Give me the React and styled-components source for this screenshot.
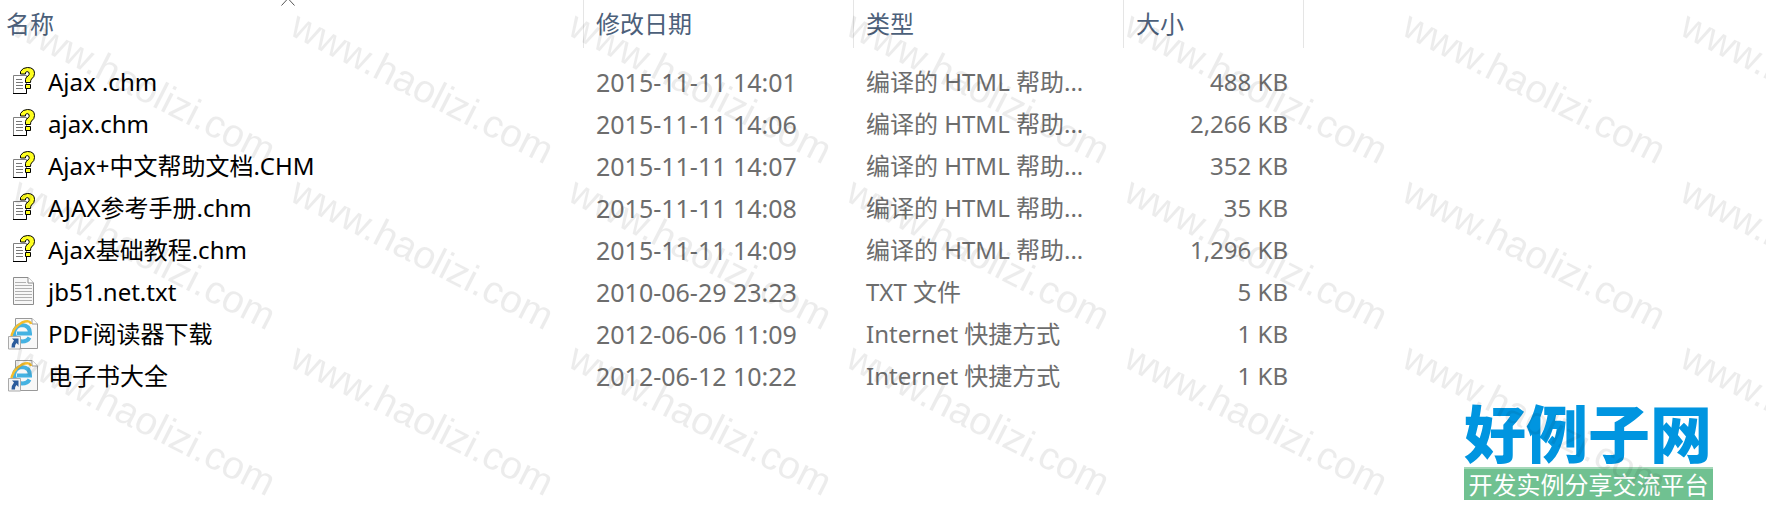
import React from "react";
import styled, { createGlobalStyle } from "styled-components";

const Global = createGlobalStyle`
  * { box-sizing: border-box; }
  body { margin: 0; background: #fff; font-family: "Noto Sans", "Noto Sans CJK SC", sans-serif; }
`;
const Page = styled.main`
  position: relative;
  min-height: 100vh;
  overflow: hidden;
`;
const FileTable = styled.table`
  width: calc(100% - 462px);
  min-width: 1000px;
  table-layout: fixed;
  border-collapse: separate;
  border-spacing: 0;
  font-size: 24px;
  line-height: 42px;
  white-space: nowrap;
`;
const Col = styled.col`
  width: ${(p) => p.$width};
`;
const HeadCell = styled.th`
  position: relative;
  height: 48px;
  padding: 0 0 0 ${(p) => (p.$first ? 6 : 12)}px;
  border-right: 1px solid #e5e5e5;
  color: #4c607a;
  font-weight: 400;
  text-align: left;
`;
const SortMark = styled.svg`
  position: absolute;
  top: 0;
  left: 48%;
  width: 16px;
  height: 6px;
`;
const Body = styled.tbody`
  &::before {
    content: "";
    display: block;
    height: 13px;
  }
`;
const Cell = styled.td`
  height: 42px;
  padding: 0 16px 0 12px;
  color: #6d6d6d;
  font-size: ${(p) => (p.$date ? 25 : 24)}px;
  text-align: ${(p) => (p.$right ? "right" : "left")};
`;
const NameCell = styled(Cell)`
  padding: 0 0 0 8px;
  color: #000;
`;
const FileName = styled.div`
  display: flex;
  align-items: center;
  gap: 8px;
`;
const Icon = styled.svg`
  flex: none;
  width: 32px;
  height: 32px;
`;
const Footer = styled.footer`
  display: flex;
  justify-content: flex-end;
  padding: 4px 53px 10px;
`;
const Logo = styled.div`
  width: 249px;
`;
const LogoTitle = styled.div`
  color: #0095e0;
  font-size: 62px;
  font-weight: 900;
  line-height: 66px;
  white-space: nowrap;
`;
const LogoTag = styled.div`
  height: 33px;
  border-top: 2px solid #a5d8b9;
  background: #70c191;
  color: #fff;
  font-size: 24px;
  line-height: 31px;
  text-align: center;
  white-space: nowrap;
`;
const Watermark = styled.svg`
  position: absolute;
  inset: 0;
  width: 100%;
  height: 100%;
  pointer-events: none;
  font-family: "Liberation Sans", sans-serif;
  font-size: 39px;
`;

const ChmIcon = () => (
  <Icon viewBox="0 0 32 32" aria-hidden="true">
    <path d="M5.5 9.500H18.500V27.500H5.500z" fill="#fff" stroke="#808080" />
    <path d="M5 27.500H18.500V20" fill="none" stroke="#000" />
    <path d="M8 13.500h6M8 16.500h7M8 19.500h7M8 22.500h7" stroke="#777" />
    <path d="M12.500 8V5.500Q14.500 1.500 19.500 1.500Q26.500 1.500 26.500 7.500Q26.500 11 23.500 13Q22.500 14 22.500 16.500H17.500V13.500Q17.500 11.500 20 10Q21.800 8.500 21 6.500Q19 4.500 17.500 6.500V8z" fill="#ffff20" stroke="#000" />
    <path d="M17.500 18.500H22.500V22.500H17.500z" fill="#ffff20" stroke="#000" />
  </Icon>
);
const TxtIcon = () => (
  <Icon viewBox="0 0 32 32" aria-hidden="true">
    <path d="M5.500 1.500H20L25.500 7V28.500H5.500z" fill="#f7f7f7" stroke="#8c8c8c" />
    <path d="M20 1.500V7H25.500" fill="#fff" stroke="#8c8c8c" />
    <path d="M7 6.500h11M7 9.500h17M7 12.500h17M7 15.500h17M7 18.500h17M7 21.500h17M7 24.500h17" stroke="#b0b0b0" />
  </Icon>
);
const LinkIcon = () => (
  <Icon viewBox="0 0 32 32" aria-hidden="true">
    <path d="M7.500 .5H24L29.500 6V30.500H7.500z" fill="#f8f8f8" stroke="#999" />
    <path d="M24 .5V6H29.500" fill="#fff" stroke="#999" />
    <path d="M21.500 19.500Q19.500 23.500 14 23.500Q6.500 22.500 6 15Q7 7.500 14 7Q22 7.500 22 15.500H9" fill="none" stroke="#45b2e2" strokeWidth="4" />
    <path d="M3 22Q3.500 10 14 4.500Q22 1.500 23 6" fill="none" stroke="#f5bd2b" strokeWidth="2.500" />
    <path d="M.5 18.500H12.500V31H.5z" fill="#f5f5f5" stroke="#aaa" />
    <path d="M4 20.500H10.500V27L8.500 25Q6.500 27 7 29.500H3.500Q3 26 6 22.500z" fill="#2b5c9c" />
  </Icon>
);
const icons = { chm: ChmIcon, txt: TxtIcon, link: LinkIcon };

const files = [
  ["chm", "Ajax .chm", "2015-11-11 14:01", "编译的 HTML 帮助...", "488 KB"],
  ["chm", "ajax.chm", "2015-11-11 14:06", "编译的 HTML 帮助...", "2,266 KB"],
  ["chm", "Ajax+中文帮助文档.CHM", "2015-11-11 14:07", "编译的 HTML 帮助...", "352 KB"],
  ["chm", "AJAX参考手册.chm", "2015-11-11 14:08", "编译的 HTML 帮助...", "35 KB"],
  ["chm", "Ajax基础教程.chm", "2015-11-11 14:09", "编译的 HTML 帮助...", "1,296 KB"],
  ["txt", "jb51.net.txt", "2010-06-29 23:23", "TXT 文件", "5 KB"],
  ["link", "PDF阅读器下载", "2012-06-06 11:09", "Internet 快捷方式", "1 KB"],
  ["link", "电子书大全", "2012-06-12 10:22", "Internet 快捷方式", "1 KB"],
];

export default function App() {
  return (
    <Page lang="zh-CN">
      <Global />
      <FileTable>
        <colgroup>
          <Col $width="auto" />
          <Col $width="270px" />
          <Col $width="270px" />
          <Col $width="180px" />
        </colgroup>
        <thead>
          <tr>
            <HeadCell $first scope="col" aria-sort="ascending">
              名称
              <SortMark viewBox="0 0 16 6" aria-hidden="true">
                <path d="M1.500 5.500L8-1.500L14.500 5.500" fill="none" stroke="#555" />
              </SortMark>
            </HeadCell>
            <HeadCell scope="col">修改日期</HeadCell>
            <HeadCell scope="col">类型</HeadCell>
            <HeadCell scope="col">大小</HeadCell>
          </tr>
        </thead>
        <Body>
          {files.map(([kind, name, date, type, size]) => {
            const Glyph = icons[kind];
            return (
              <tr key={name}>
                <NameCell>
                  <FileName><Glyph />{name}</FileName>
                </NameCell>
                <Cell $date>{date}</Cell>
                <Cell>{type}</Cell>
                <Cell $right>{size}</Cell>
              </tr>
            );
          })}
        </Body>
      </FileTable>
      <Footer>
        <Logo>
          <LogoTitle>好例子网</LogoTitle>
          <LogoTag>开发实例分享交流平台</LogoTag>
        </Logo>
      </Footer>
      <Watermark aria-hidden="true">
        <defs>
          <pattern id="mark" width="278" height="166" patternUnits="userSpaceOnUse">
            <text transform="translate(10 34) rotate(27)" fill="#000" fillOpacity="0.075">www.haolizi.com</text>
          </pattern>
        </defs>
        <rect width="100%" height="100%" fill="url(#mark)" />
      </Watermark>
    </Page>
  );
}
